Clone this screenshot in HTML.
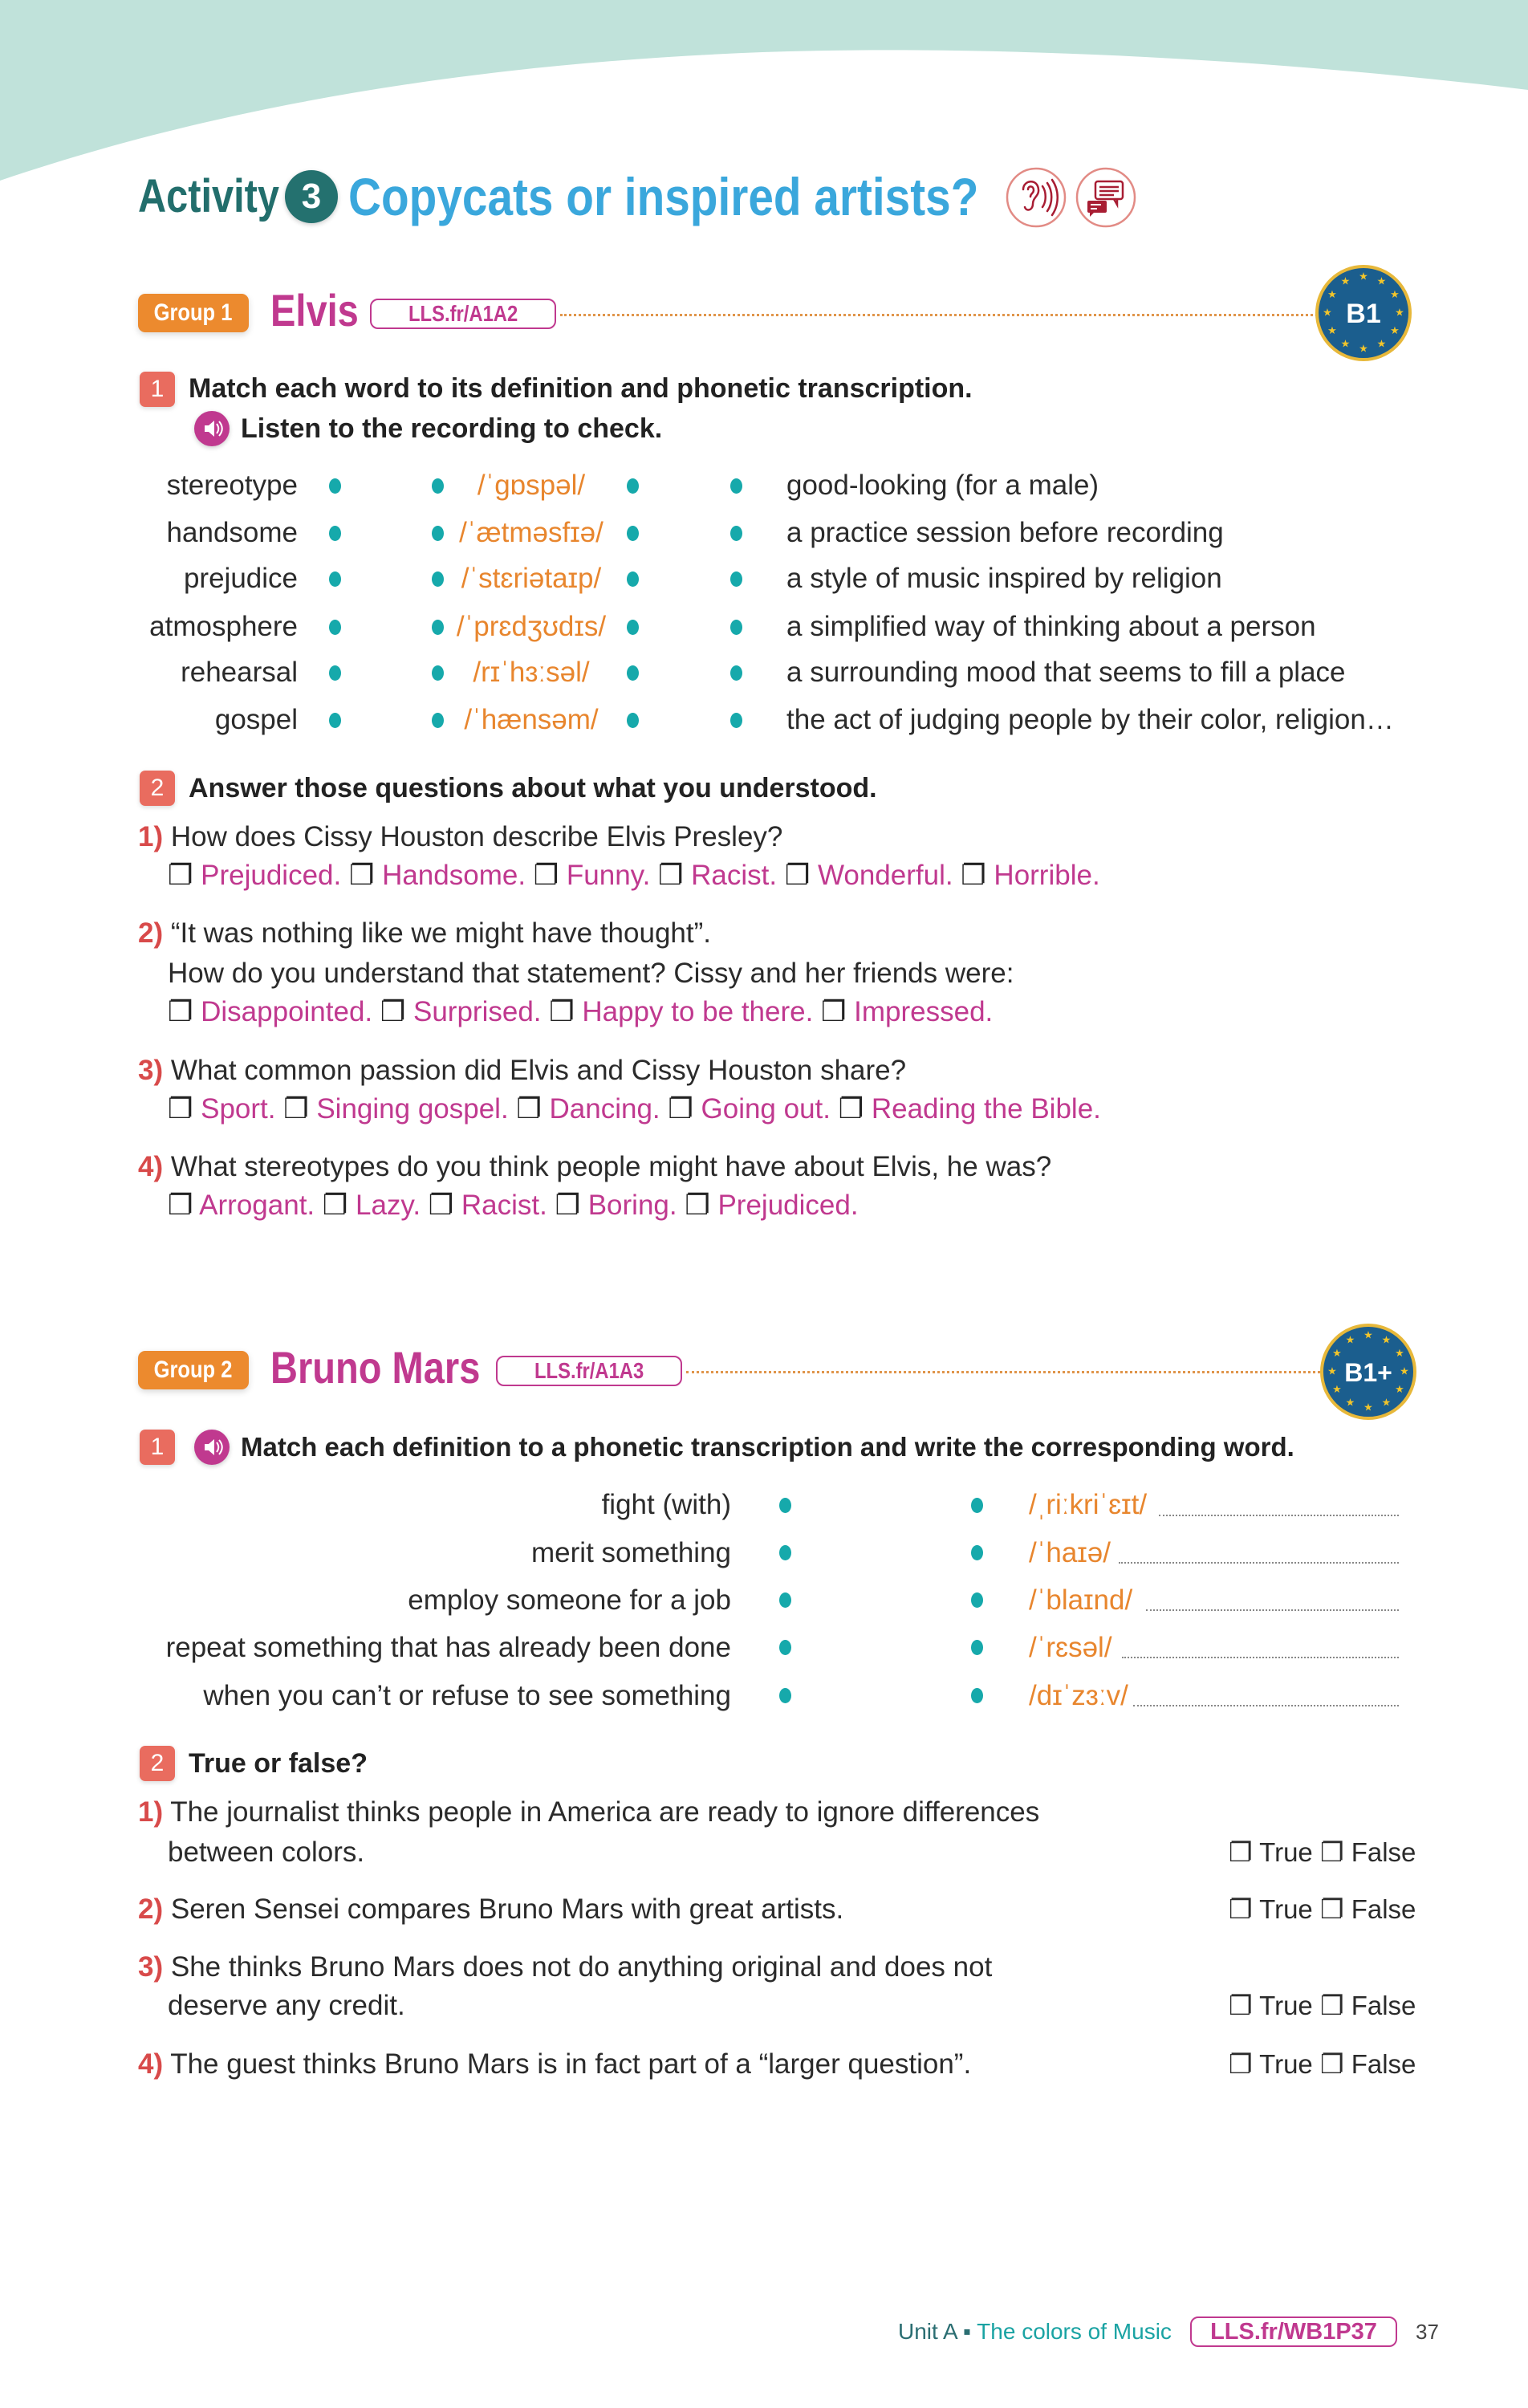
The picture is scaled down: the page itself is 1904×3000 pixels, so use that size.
<!DOCTYPE html>
<html><head><meta charset="utf-8">
<style>
*{margin:0;padding:0;box-sizing:border-box}
body{width:1904px;height:3000px;position:relative;background:#fff;font-family:"Liberation Sans",sans-serif;overflow:hidden}
.t{position:absolute;white-space:nowrap;font-size:35px;line-height:40px;color:#2b2b2b}
.r{text-align:right}
.b{font-weight:bold;font-size:34px;color:#222}
.c{transform-origin:0 50%}
.ph{color:#e8862e}
.m{color:#c0398f}
.n{color:#d84a4a;font-weight:bold}
.dot{position:absolute;width:15px;height:19px;border-radius:50%;background:#16a9ab}
.num{position:absolute;width:44px;height:44px;border-radius:7px;background:#e96c5f;color:#fff;font-size:30px;line-height:44px;text-align:center;box-shadow:0 2px 6px rgba(0,0,0,.15)}
.spk{position:absolute;width:44px;height:44px;border-radius:50%;background:#c0398f;box-shadow:0 2px 6px rgba(0,0,0,.2)}
.grp{position:absolute;height:48px;border-radius:9px;background:#ec8a2e;color:#fff;font-weight:bold;font-size:30px;line-height:48px;text-align:center;box-shadow:0 3px 8px rgba(0,0,0,.15)}
.grp span{display:inline-block;transform:scaleX(.85)}
.lls{position:absolute;height:38px;border:2px solid #c0398f;border-radius:10px;color:#c0398f;font-weight:bold;font-size:28px;line-height:34px;text-align:center}
.lls span{display:inline-block;transform:scaleX(.85)}
.dl{position:absolute;border-top:3px dotted #e0954a;height:0}
.gl{position:absolute;border-top:2px dotted #888;height:0}
.badge{position:absolute;width:122px;height:122px}
.tf{font-size:33px}
</style></head><body>
<svg width="1904" height="240" style="position:absolute;left:0;top:0">
<path d="M0,0 H1904 V112 C1600,75 1250,55 950,65 C560,80 250,140 0,225 Z" fill="#c0e2da"/>
</svg>

<!-- Title -->
<div class="t c" style="left:172px;top:214px;font-size:58px;line-height:62px;font-weight:bold;color:#226e6c;transform:scaleX(.84)">Activity</div>
<div style="position:absolute;left:355px;top:212px;width:66px;height:66px;border-radius:50%;background:#24716f;color:#fff;font-weight:bold;font-size:44px;line-height:66px;text-align:center;box-shadow:0 2px 6px rgba(0,0,0,.2)">3</div>
<div class="t c" style="left:434px;top:210px;font-size:66px;line-height:70px;font-weight:bold;color:#3aa7dc;transform:scaleX(.86)">Copycats or inspired artists?</div>
<svg width="80" height="80" style="position:absolute;left:1251px;top:206px" viewBox="0 0 80 80">
<circle cx="40" cy="40" r="36" fill="#fff" stroke="#e28b85" stroke-width="2.5"/>
<g fill="none" stroke="#a81d33" stroke-width="2.5" stroke-linecap="round">
<path d="M24,30 C24,18 42,16 43,30 C44,38 36,40 36,48 C36,56 28,58 26,52"/>
<path d="M30,30 C30,25 37,25 37,31 C37,35 33,35 33,39"/>
<path d="M48,26 C53,33 53,45 48,52"/><path d="M54,22 C61,32 61,47 54,57"/><path d="M60,18 C69,31 69,49 60,62"/>
</g></svg>
<svg width="80" height="80" style="position:absolute;left:1338px;top:206px" viewBox="0 0 80 80">
<circle cx="40" cy="40" r="36" fill="#fff" stroke="#e28b85" stroke-width="2.5"/>
<g fill="none" stroke="#a81d33" stroke-width="2.5"><rect x="27" y="20" width="34" height="22" rx="3"/><path d="M50,42 L54,49 L54,42"/><path d="M32,27 H56 M32,32 H56 M32,37 H50"/></g>
<rect x="17" y="44" width="24" height="15" rx="2" fill="#a81d33"/><path d="M20,59 L20,64 L25,59Z" fill="#a81d33"/>
<path d="M21,49 H34 M21,54 H29" stroke="#fff" stroke-width="2"/>
</svg>

<!-- Group 1 -->
<div class="grp" style="left:172px;top:366px;width:138px"><span>Group 1</span></div>
<div class="t c" style="left:337px;top:357px;font-size:56px;line-height:60px;font-weight:bold;color:#c0398f;transform:scaleX(.84)">Elvis</div>
<div class="lls" style="left:461px;top:372px;width:232px"><span>LLS.fr/A1A2</span></div>
<div class="dl" style="left:698px;top:391px;width:944px"></div>
<svg class="badge" style="left:1638px;top:329px" viewBox="0 0 122 122">
<circle cx="61" cy="61" r="58" fill="#1b5e8e" stroke="#e7b83a" stroke-width="4"/>
<g fill="#f2c52b" font-size="13" text-anchor="middle" dominant-baseline="central" font-family="DejaVu Sans">
<text x="106" y="61">★</text><text x="100" y="83.5">★</text><text x="83.5" y="100">★</text><text x="61" y="106">★</text><text x="38.5" y="100">★</text><text x="22" y="83.5">★</text><text x="16" y="61">★</text><text x="22" y="38.5">★</text><text x="38.5" y="22">★</text><text x="61" y="16">★</text><text x="83.5" y="22">★</text><text x="100" y="38.5">★</text></g>
<text x="61" y="62" fill="#fff" font-size="34" font-weight="bold" text-anchor="middle" dominant-baseline="central" font-family="Liberation Sans">B1</text>
</svg>

<div class="num" style="left:174px;top:463px">1</div>
<div class="t b" style="left:235px;top:464px">Match each word to its definition and phonetic transcription.</div>
<div class="spk" style="left:242px;top:512px"></div>
<svg width="44" height="44" style="position:absolute;left:242px;top:512px"><path d="M13,18 H18 L25,12 V32 L18,26 H13Z" fill="#fff"/><path d="M28,16 C31,20 31,24 28,28 M31,13 C36,19 36,25 31,31" stroke="#fff" stroke-width="2" fill="none"/></svg>
<div class="t b" style="left:300px;top:514px">Listen to the recording to check.</div>

<div class="t r" style="right:1533px;top:585px">stereotype</div>
<div class="t r" style="right:1533px;top:644px">handsome</div>
<div class="t r" style="right:1533px;top:701px">prejudice</div>
<div class="t r" style="right:1533px;top:761px">atmosphere</div>
<div class="t r" style="right:1533px;top:818px">rehearsal</div>
<div class="t r" style="right:1533px;top:877px">gospel</div>

<div class="dot" style="left:410px;top:596px"></div><div class="dot" style="left:538px;top:596px"></div><div class="dot" style="left:781px;top:596px"></div><div class="dot" style="left:910px;top:596px"></div>
<div class="dot" style="left:410px;top:655px"></div><div class="dot" style="left:538px;top:655px"></div><div class="dot" style="left:781px;top:655px"></div><div class="dot" style="left:910px;top:655px"></div>
<div class="dot" style="left:410px;top:712px"></div><div class="dot" style="left:538px;top:712px"></div><div class="dot" style="left:781px;top:712px"></div><div class="dot" style="left:910px;top:712px"></div>
<div class="dot" style="left:410px;top:772px"></div><div class="dot" style="left:538px;top:772px"></div><div class="dot" style="left:781px;top:772px"></div><div class="dot" style="left:910px;top:772px"></div>
<div class="dot" style="left:410px;top:829px"></div><div class="dot" style="left:538px;top:829px"></div><div class="dot" style="left:781px;top:829px"></div><div class="dot" style="left:910px;top:829px"></div>
<div class="dot" style="left:410px;top:888px"></div><div class="dot" style="left:538px;top:888px"></div><div class="dot" style="left:781px;top:888px"></div><div class="dot" style="left:910px;top:888px"></div>

<div class="t ph" style="left:562px;width:200px;text-align:center;top:585px">/ˈɡɒspəl/</div>
<div class="t ph" style="left:562px;width:200px;text-align:center;top:644px">/ˈætməsfɪə/</div>
<div class="t ph" style="left:562px;width:200px;text-align:center;top:701px">/ˈstɛriətaɪp/</div>
<div class="t ph" style="left:562px;width:200px;text-align:center;top:761px">/ˈprɛdʒʊdɪs/</div>
<div class="t ph" style="left:562px;width:200px;text-align:center;top:818px">/rɪˈhɜːsəl/</div>
<div class="t ph" style="left:562px;width:200px;text-align:center;top:877px">/ˈhænsəm/</div>

<div class="t" style="left:980px;top:585px">good-looking (for a male)</div>
<div class="t" style="left:980px;top:644px">a practice session before recording</div>
<div class="t" style="left:980px;top:701px">a style of music inspired by religion</div>
<div class="t" style="left:980px;top:761px">a simplified way of thinking about a person</div>
<div class="t" style="left:980px;top:818px">a surrounding mood that seems to fill a place</div>
<div class="t" style="left:980px;top:877px">the act of judging people by their color, religion…</div>

<div class="num" style="left:174px;top:960px">2</div>
<div class="t b" style="left:235px;top:962px">Answer those questions about what you understood.</div>

<div class="t" style="left:172px;top:1023px"><span class="n">1)</span> How does Cissy Houston describe Elvis Presley?</div>
<div class="t m" style="left:209px;top:1071px"><span style="color:#222">❐</span> Prejudiced. <span style="color:#222">❐</span> Handsome. <span style="color:#222">❐</span> Funny. <span style="color:#222">❐</span> Racist. <span style="color:#222">❐</span> Wonderful. <span style="color:#222">❐</span> Horrible.</div>

<div class="t" style="left:172px;top:1143px"><span class="n">2)</span> “It was nothing like we might have thought”.</div>
<div class="t" style="left:209px;top:1193px">How do you understand that statement? Cissy and her friends were:</div>
<div class="t m" style="left:209px;top:1241px"><span style="color:#222">❐</span> Disappointed. <span style="color:#222">❐</span> Surprised. <span style="color:#222">❐</span> Happy to be there. <span style="color:#222">❐</span> Impressed.</div>

<div class="t" style="left:172px;top:1314px"><span class="n">3)</span> What common passion did Elvis and Cissy Houston share?</div>
<div class="t m" style="left:209px;top:1362px"><span style="color:#222">❐</span> Sport. <span style="color:#222">❐</span> Singing gospel. <span style="color:#222">❐</span> Dancing. <span style="color:#222">❐</span> Going out. <span style="color:#222">❐</span> Reading the Bible.</div>

<div class="t" style="left:172px;top:1434px"><span class="n">4)</span> What stereotypes do you think people might have about Elvis, he was?</div>
<div class="t m" style="left:209px;top:1482px"><span style="color:#222">❐</span> Arrogant. <span style="color:#222">❐</span> Lazy. <span style="color:#222">❐</span> Racist. <span style="color:#222">❐</span> Boring. <span style="color:#222">❐</span> Prejudiced.</div>

<!-- Group 2 -->
<div class="grp" style="left:172px;top:1683px;width:138px"><span>Group 2</span></div>
<div class="t c" style="left:337px;top:1674px;font-size:56px;line-height:60px;font-weight:bold;color:#c0398f;transform:scaleX(.84)">Bruno Mars</div>
<div class="lls" style="left:618px;top:1689px;width:232px"><span>LLS.fr/A1A3</span></div>
<div class="dl" style="left:855px;top:1708px;width:790px"></div>
<svg class="badge" style="left:1644px;top:1648px" viewBox="0 0 122 122">
<circle cx="61" cy="61" r="58" fill="#1b5e8e" stroke="#e7b83a" stroke-width="4"/>
<g fill="#f2c52b" font-size="13" text-anchor="middle" dominant-baseline="central" font-family="DejaVu Sans">
<text x="106" y="61">★</text><text x="100" y="83.5">★</text><text x="83.5" y="100">★</text><text x="61" y="106">★</text><text x="38.5" y="100">★</text><text x="22" y="83.5">★</text><text x="16" y="61">★</text><text x="22" y="38.5">★</text><text x="38.5" y="22">★</text><text x="61" y="16">★</text><text x="83.5" y="22">★</text><text x="100" y="38.5">★</text></g>
<text x="61" y="62" fill="#fff" font-size="32" font-weight="bold" text-anchor="middle" dominant-baseline="central" font-family="Liberation Sans">B1+</text>
</svg>

<div class="num" style="left:174px;top:1781px">1</div>
<div class="spk" style="left:242px;top:1781px"></div>
<svg width="44" height="44" style="position:absolute;left:242px;top:1781px"><path d="M13,18 H18 L25,12 V32 L18,26 H13Z" fill="#fff"/><path d="M28,16 C31,20 31,24 28,28 M31,13 C36,19 36,25 31,31" stroke="#fff" stroke-width="2" fill="none"/></svg>
<div class="t b" style="left:300px;top:1783px;font-size:33px">Match each definition to a phonetic transcription and write the corresponding word.</div>

<div class="t r" style="right:993px;top:1855px">fight (with)</div>
<div class="t r" style="right:993px;top:1915px">merit something</div>
<div class="t r" style="right:993px;top:1974px">employ someone for a job</div>
<div class="t r" style="right:993px;top:2033px">repeat something that has already been done</div>
<div class="t r" style="right:993px;top:2093px">when you can’t or refuse to see something</div>

<div class="dot" style="left:971px;top:1866px"></div><div class="dot" style="left:1210px;top:1866px"></div>
<div class="dot" style="left:971px;top:1925px"></div><div class="dot" style="left:1210px;top:1925px"></div>
<div class="dot" style="left:971px;top:1984px"></div><div class="dot" style="left:1210px;top:1984px"></div>
<div class="dot" style="left:971px;top:2043px"></div><div class="dot" style="left:1210px;top:2043px"></div>
<div class="dot" style="left:971px;top:2103px"></div><div class="dot" style="left:1210px;top:2103px"></div>

<div class="t ph" style="left:1282px;top:1855px">/ˌriːkriˈɛɪt/</div><div class="gl" style="left:1444px;top:1887px;width:299px"></div>
<div class="t ph" style="left:1282px;top:1915px">/ˈhaɪə/</div><div class="gl" style="left:1394px;top:1946px;width:349px"></div>
<div class="t ph" style="left:1282px;top:1974px">/ˈblaɪnd/</div><div class="gl" style="left:1428px;top:2005px;width:315px"></div>
<div class="t ph" style="left:1282px;top:2033px">/ˈrɛsəl/</div><div class="gl" style="left:1398px;top:2064px;width:345px"></div>
<div class="t ph" style="left:1282px;top:2093px">/dɪˈzɜːv/</div><div class="gl" style="left:1412px;top:2124px;width:331px"></div>

<div class="num" style="left:174px;top:2175px">2</div>
<div class="t b" style="left:235px;top:2177px">True or false?</div>

<div class="t" style="left:172px;top:2238px"><span class="n">1)</span> The journalist thinks people in America are ready to ignore differences</div>
<div class="t" style="left:209px;top:2288px">between colors.</div>
<div class="t tf" style="left:1531px;top:2288px">❐ True ❐ False</div>
<div class="t" style="left:172px;top:2359px"><span class="n">2)</span> Seren Sensei compares Bruno Mars with great artists.</div>
<div class="t tf" style="left:1531px;top:2359px">❐ True ❐ False</div>
<div class="t" style="left:172px;top:2431px"><span class="n">3)</span> She thinks Bruno Mars does not do anything original and does not</div>
<div class="t" style="left:209px;top:2479px">deserve any credit.</div>
<div class="t tf" style="left:1531px;top:2479px">❐ True ❐ False</div>
<div class="t" style="left:172px;top:2552px"><span class="n">4)</span> The guest thinks Bruno Mars is in fact part of a “larger question”.</div>
<div class="t tf" style="left:1531px;top:2552px">❐ True ❐ False</div>

<!-- footer -->
<div class="t" style="left:1119px;top:2888px;font-size:28px;line-height:34px;color:#1aa3a3"><span style="color:#2b6e72">Unit A</span> <span style="color:#2b6e72">▪</span> The colors of Music</div>
<div class="lls" style="left:1483px;top:2886px;width:258px;font-size:29px"><span style="transform:none">LLS.fr/WB1P37</span></div>
<div class="t" style="left:1764px;top:2888px;font-size:26px;line-height:34px;color:#444">37</div>
</body></html>
